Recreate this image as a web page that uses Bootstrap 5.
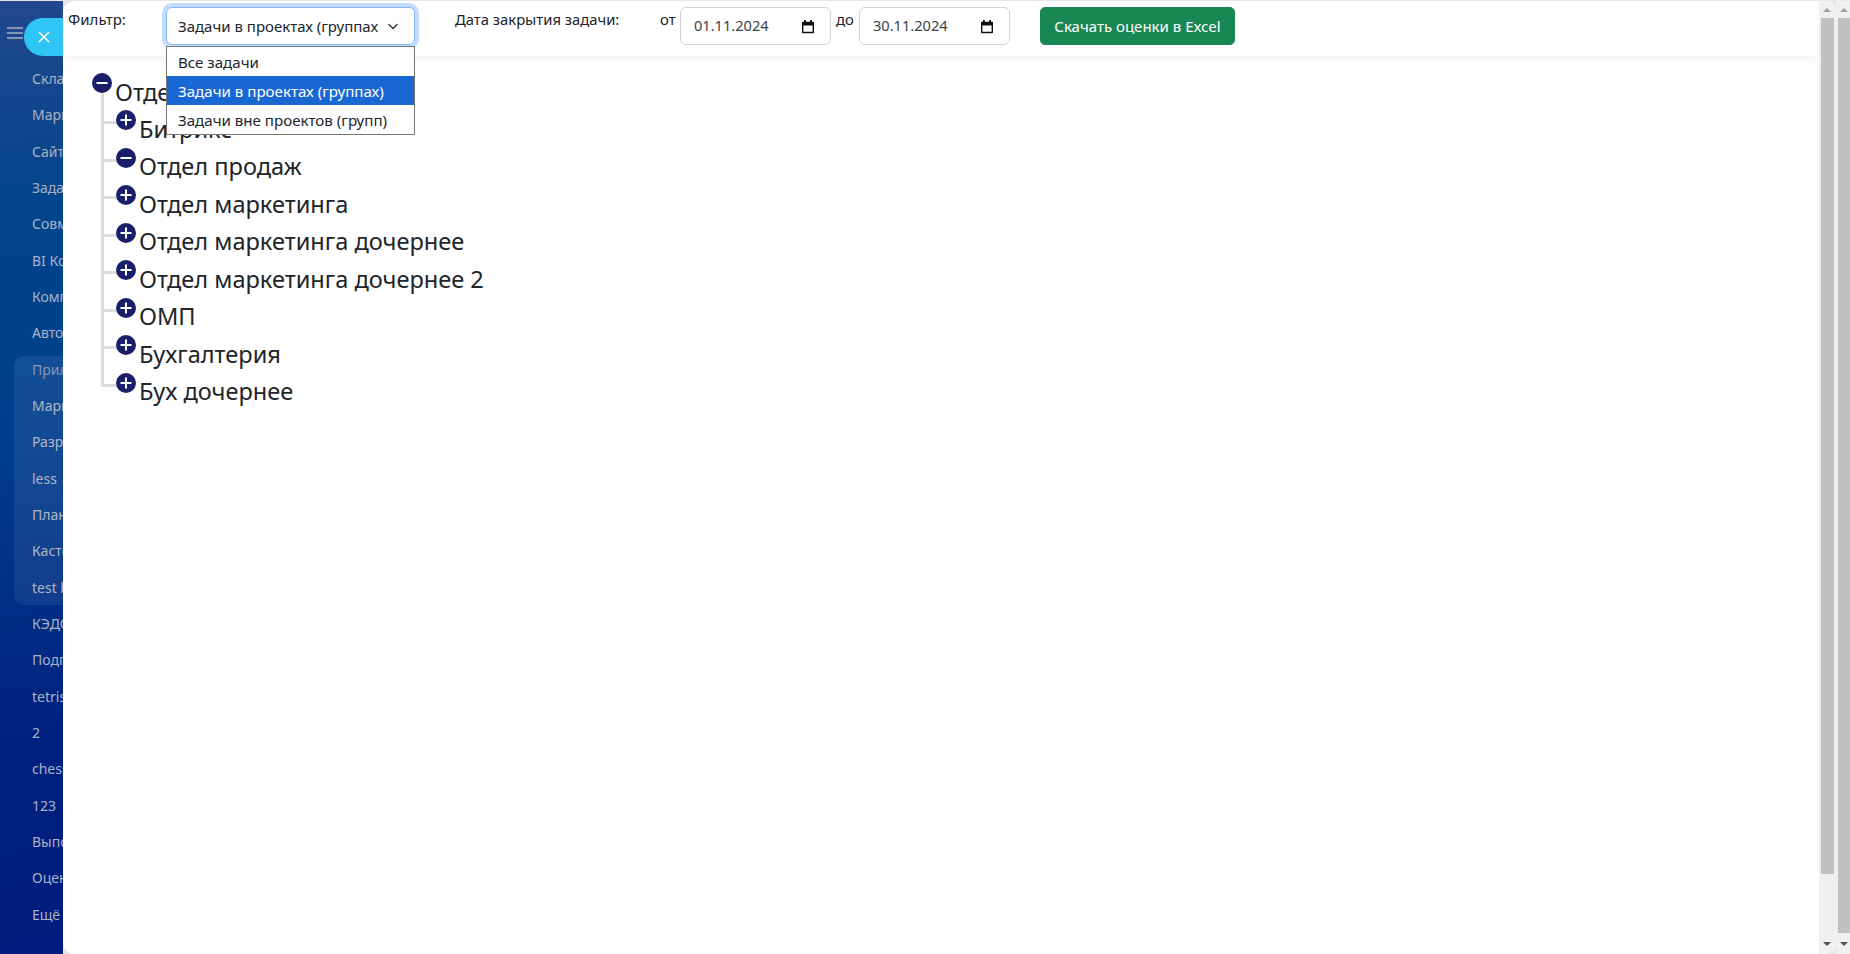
<!DOCTYPE html>
<html lang="ru">
<head>
<meta charset="utf-8">
<title>Оценки</title>
<link href="https://cdn.jsdelivr.net/npm/bootstrap@5.3.0/dist/css/bootstrap.min.css" rel="stylesheet">
<style>
html,body{height:954px;overflow:hidden;margin:0}
body{font-family:"Noto Sans","Open Sans",sans-serif;color:#212529;background:#e6e6e6;padding-top:1px}
.shell{height:953px}
.side{width:63px;flex:none;overflow:hidden;position:relative;background:linear-gradient(175deg,#23478c 0,#00458d 22%,#003f8c 45%,#00207f 78%,#001c7e 100%)}
.burger{position:absolute;left:7px;top:26px;width:16px;height:12px;border-top:2px solid #8496b8;border-bottom:2px solid #8496b8}
.burger::after{content:"";position:absolute;left:0;right:0;top:3px;height:2px;background:#8496b8}
.pill{position:absolute;left:24px;top:17px;width:60px;height:38px;border-radius:19px;background:#2fc6f6;color:#fff}
.pill svg{margin-left:14px}
.menu-list{padding:60px 0 0 32px;font-size:14px;white-space:nowrap;color:#a9b2c4}
.menu-list div{height:36.33px;line-height:36.33px}
.menu-list .dim{color:#7f93b6}
.grp{position:absolute;left:14px;top:355px;width:70px;height:249px;border-radius:10px;background:rgba(255,255,255,.07)}
.panel{flex:1 1 auto;min-width:0;background:#fff;border-top-left-radius:12px;border-bottom-left-radius:12px;border-top-right-radius:10px;border-bottom-right-radius:10px;overflow:hidden;position:relative}
.content{flex:1 1 auto;min-width:0;position:relative}
.tools{height:55px;background:#fff;box-shadow:0 2px 10px rgba(0,0,0,.07);font-size:15px;position:relative}
.lab{position:absolute;top:9px;line-height:18px}
.lab-f{left:5px}.lab-d{left:392px;font-size:14.8px}.lab-o{left:597px;font-size:14.8px}.lab-t{left:773px;font-size:14.8px}
.pick{position:absolute;top:6px;height:38px;font-size:14.6px;padding:0 15px 0 13px;display:flex;align-items:center;justify-content:space-between;border-radius:6px;border-color:#ced4da;background:#fff;color:#3c4248}
.pick-a{left:617px;width:151px}.pick-b{left:796px;width:151px}
.sel{position:absolute;left:103px;top:6px;width:249px;height:38px;font-size:15px;padding:0 36px 0 11px;border-radius:6px;border-color:#86b7fe;box-shadow:0 0 0 4px rgba(13,110,253,.25);color:#212529;background-size:14px 11px;background-position:right 14px center}
.dl{position:absolute;left:103px;top:45px;width:249px;border:1px solid #767676;background:#fff;font-size:15.1px;z-index:5}
.dl div{height:29px;line-height:30px;padding-left:11px}
.dl .on{background:#1967d2;color:#fff}
.xls{position:absolute;left:977px;top:6px;width:195px;height:38px;padding:0;font-size:15px;background:#198754;border-color:#198754;border-radius:5px}
.tree{padding:17px 0 0 29px;list-style:none;margin:0;font-size:23.6px}
.tree ul{list-style:none;margin:0;padding:0 0 0 24px;position:relative}
.tree li{position:relative}
.tr{display:flex;height:37.45px}
.tr svg{flex:none;width:20px;height:20px;position:relative;z-index:1}
.tr span{margin:1.5px 0 0 3px;line-height:35px;white-space:nowrap}
.tree ul>li::before{content:"";position:absolute;left:-15px;top:-25px;width:15px;height:39px;border-left:3px solid #ddd;border-bottom:3px solid #ddd}
.tree ul>li:first-child::before{top:-18px;height:32px}
.sb{flex:none;position:relative;background:#f0f0f0}
.sb-in{width:17px}
.sb-out{width:14px}
.th{position:absolute;top:17px;background:#c1c1c1}
.sb-in .th{left:2px;width:13px;height:856px}
.sb-out .th{left:2px;width:12px;height:915px}
.up,.dn{position:absolute;width:0;height:0;border-left:4px solid transparent;border-right:4px solid transparent}
.up{top:7px;border-bottom:4px solid #a3a3a3}
.dn{bottom:8px;border-top:4px solid #505050}
.sb-in .up,.sb-in .dn{left:4px}
.sb-out .up,.sb-out .dn{left:4px}
</style>
</head>
<body>
<div class="shell d-flex">
  <aside class="side">
    <div class="grp"></div>
    <div class="burger"></div>
    <div class="pill d-flex align-items-center"><svg width="12" height="12" viewBox="0 0 12 12"><path d="M1 1l10 10M11 1L1 11" stroke="#fff" stroke-width="1.6" fill="none"/></svg></div>
    <div class="menu-list">
      <div>Склад</div><div>Маркетинг</div><div>Сайты</div><div>Задачи</div><div>Совместная</div><div>BI Конструктор</div><div>Компания</div><div>Автоматизация</div><div class="dim">Приложения</div><div>Маркет</div><div>Разработчикам</div><div>less</div><div>Планировщик</div><div>Кастомные</div><div>test block</div><div>КЭДО</div><div>Подписка</div><div>tetris</div><div>2</div><div>chess</div><div>123</div><div>Выполнение</div><div>Оценки</div><div>Ещё</div>
    </div>
  </aside>
  <main class="panel d-flex">
    <div class="content">
      <div class="tools">
        <span class="lab lab-f">Фильтр:</span>
        <select class="form-select sel" aria-label="Фильтр"><option>Все задачи</option><option selected>Задачи в проектах (группах)</option><option>Задачи вне проектов (групп)</option></select>
        <div class="dl"><div>Все задачи</div><div class="on">Задачи в проектах (группах)</div><div>Задачи вне проектов (групп)</div></div>
        <span class="lab lab-d">Дата закрытия задачи:</span>
        <span class="lab lab-o">от</span>
        <div class="form-control pick pick-a"><span>01.11.2024</span><svg width="14" height="15" viewBox="0 0 14 15"><path d="M1.700 3.500h10.600v10h-10.600z" fill="none" stroke="#111" stroke-width="1.4" stroke-linejoin="round"/><path d="M1 3h12v3.500H1zM3 1h1.800v2.500H3zM9.200 1h1.800v2.500H9.200z" fill="#111"/></svg></div>
        <span class="lab lab-t">до</span>
        <div class="form-control pick pick-b"><span>30.11.2024</span><svg width="14" height="15" viewBox="0 0 14 15"><path d="M1.700 3.500h10.600v10h-10.600z" fill="none" stroke="#111" stroke-width="1.4" stroke-linejoin="round"/><path d="M1 3h12v3.500H1zM3 1h1.800v2.500H3zM9.200 1h1.800v2.500H9.200z" fill="#111"/></svg></div>
        <button type="button" class="btn btn-success xls">Скачать оценки в Excel</button>
      </div>
      <ul class="tree">
        <li>
          <div class="tr"><svg viewBox="0 0 20 20"><circle cx="10" cy="10" r="10" fill="#1b1f6b"/><path d="M4.500 10h11" stroke="#fff" stroke-width="2"/></svg><span>Отдел</span></div>
          <ul>
            <li><div class="tr"><svg viewBox="0 0 20 20"><circle cx="10" cy="10" r="10" fill="#1b1f6b"/><path d="M4.500 10h11M10 4.500v11" stroke="#fff" stroke-width="2"/></svg><span>Битрикс</span></div></li>
            <li><div class="tr"><svg viewBox="0 0 20 20"><circle cx="10" cy="10" r="10" fill="#1b1f6b"/><path d="M4.500 10h11" stroke="#fff" stroke-width="2"/></svg><span>Отдел продаж</span></div></li>
            <li><div class="tr"><svg viewBox="0 0 20 20"><circle cx="10" cy="10" r="10" fill="#1b1f6b"/><path d="M4.500 10h11M10 4.500v11" stroke="#fff" stroke-width="2"/></svg><span>Отдел маркетинга</span></div></li>
            <li><div class="tr"><svg viewBox="0 0 20 20"><circle cx="10" cy="10" r="10" fill="#1b1f6b"/><path d="M4.500 10h11M10 4.500v11" stroke="#fff" stroke-width="2"/></svg><span>Отдел маркетинга дочернее</span></div></li>
            <li><div class="tr"><svg viewBox="0 0 20 20"><circle cx="10" cy="10" r="10" fill="#1b1f6b"/><path d="M4.500 10h11M10 4.500v11" stroke="#fff" stroke-width="2"/></svg><span>Отдел маркетинга дочернее 2</span></div></li>
            <li><div class="tr"><svg viewBox="0 0 20 20"><circle cx="10" cy="10" r="10" fill="#1b1f6b"/><path d="M4.500 10h11M10 4.500v11" stroke="#fff" stroke-width="2"/></svg><span>ОМП</span></div></li>
            <li><div class="tr"><svg viewBox="0 0 20 20"><circle cx="10" cy="10" r="10" fill="#1b1f6b"/><path d="M4.500 10h11M10 4.500v11" stroke="#fff" stroke-width="2"/></svg><span>Бухгалтерия</span></div></li>
            <li><div class="tr"><svg viewBox="0 0 20 20"><circle cx="10" cy="10" r="10" fill="#1b1f6b"/><path d="M4.500 10h11M10 4.500v11" stroke="#fff" stroke-width="2"/></svg><span>Бух дочернее</span></div></li>
          </ul>
        </li>
      </ul>
    </div>
    <div class="sb sb-in"><i class="up"></i><div class="th"></div><i class="dn"></i></div>
  </main>
  <div class="sb sb-out"><i class="up"></i><div class="th"></div><i class="dn"></i></div>
</div>
</body>
</html>
